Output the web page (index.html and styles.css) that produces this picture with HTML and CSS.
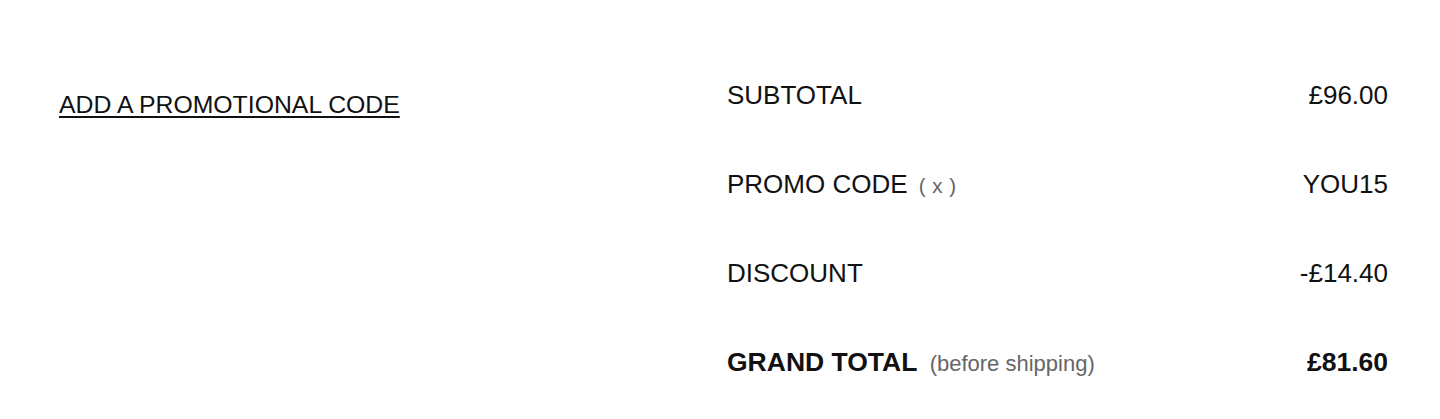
FILE: index.html
```html
<!DOCTYPE html>
<html lang="en">
<head>
<meta charset="utf-8">
<title>Order summary</title>
<link rel="stylesheet" href="styles.css">
</head>
<body>
<section class="summary">
  <div class="promo">
    <a class="promo-link" href="#">ADD A PROMOTIONAL CODE</a>
  </div>
  <div class="totals">
    <div class="row">
      <span class="label">SUBTOTAL</span>
      <span class="value">£96.00</span>
    </div>
    <div class="row">
      <span class="label">PROMO CODE <span class="remove">( x )</span></span>
      <span class="value">YOU15</span>
    </div>
    <div class="row">
      <span class="label">DISCOUNT</span>
      <span class="value">-£14.40</span>
    </div>
    <div class="row grand">
      <span class="label"><strong>GRAND TOTAL</strong> <span class="note">(before shipping)</span></span>
      <span class="value"><strong>£81.60</strong></span>
    </div>
  </div>
</section>
</body>
</html>
```

FILE: styles.css
```css
html, body {
  margin: 0;
  padding: 0;
  background: #ffffff;
}

body {
  font-family: "Liberation Sans", Arial, Helvetica, sans-serif;
  color: #111111;
  height: 419px;
  overflow: hidden;
}

.summary {
  display: grid;
  grid-template-columns: 668px 1fr;
  padding: 51px 52px 0 59px;
}

.promo {
  padding-top: 9px;
  line-height: 89px;
}

.promo-link {
  font-size: 24.8px;
  color: #111111;
  text-decoration: underline;
  text-decoration-thickness: 2px;
  text-underline-offset: 3px;
}

.totals {
  display: flex;
  flex-direction: column;
}

.row {
  display: flex;
  justify-content: space-between;
  align-items: baseline;
  height: 89px;
  line-height: 89px;
  font-size: 26px;
}

.remove {
  font-size: 20.5px;
  color: #666666;
  margin-left: 4px;
  word-spacing: 1px;
}

.note {
  font-size: 22px;
  color: #666666;
  margin-left: 5px;
}

.grand strong {
  font-weight: 700;
  font-size: 26.5px;
}
```
